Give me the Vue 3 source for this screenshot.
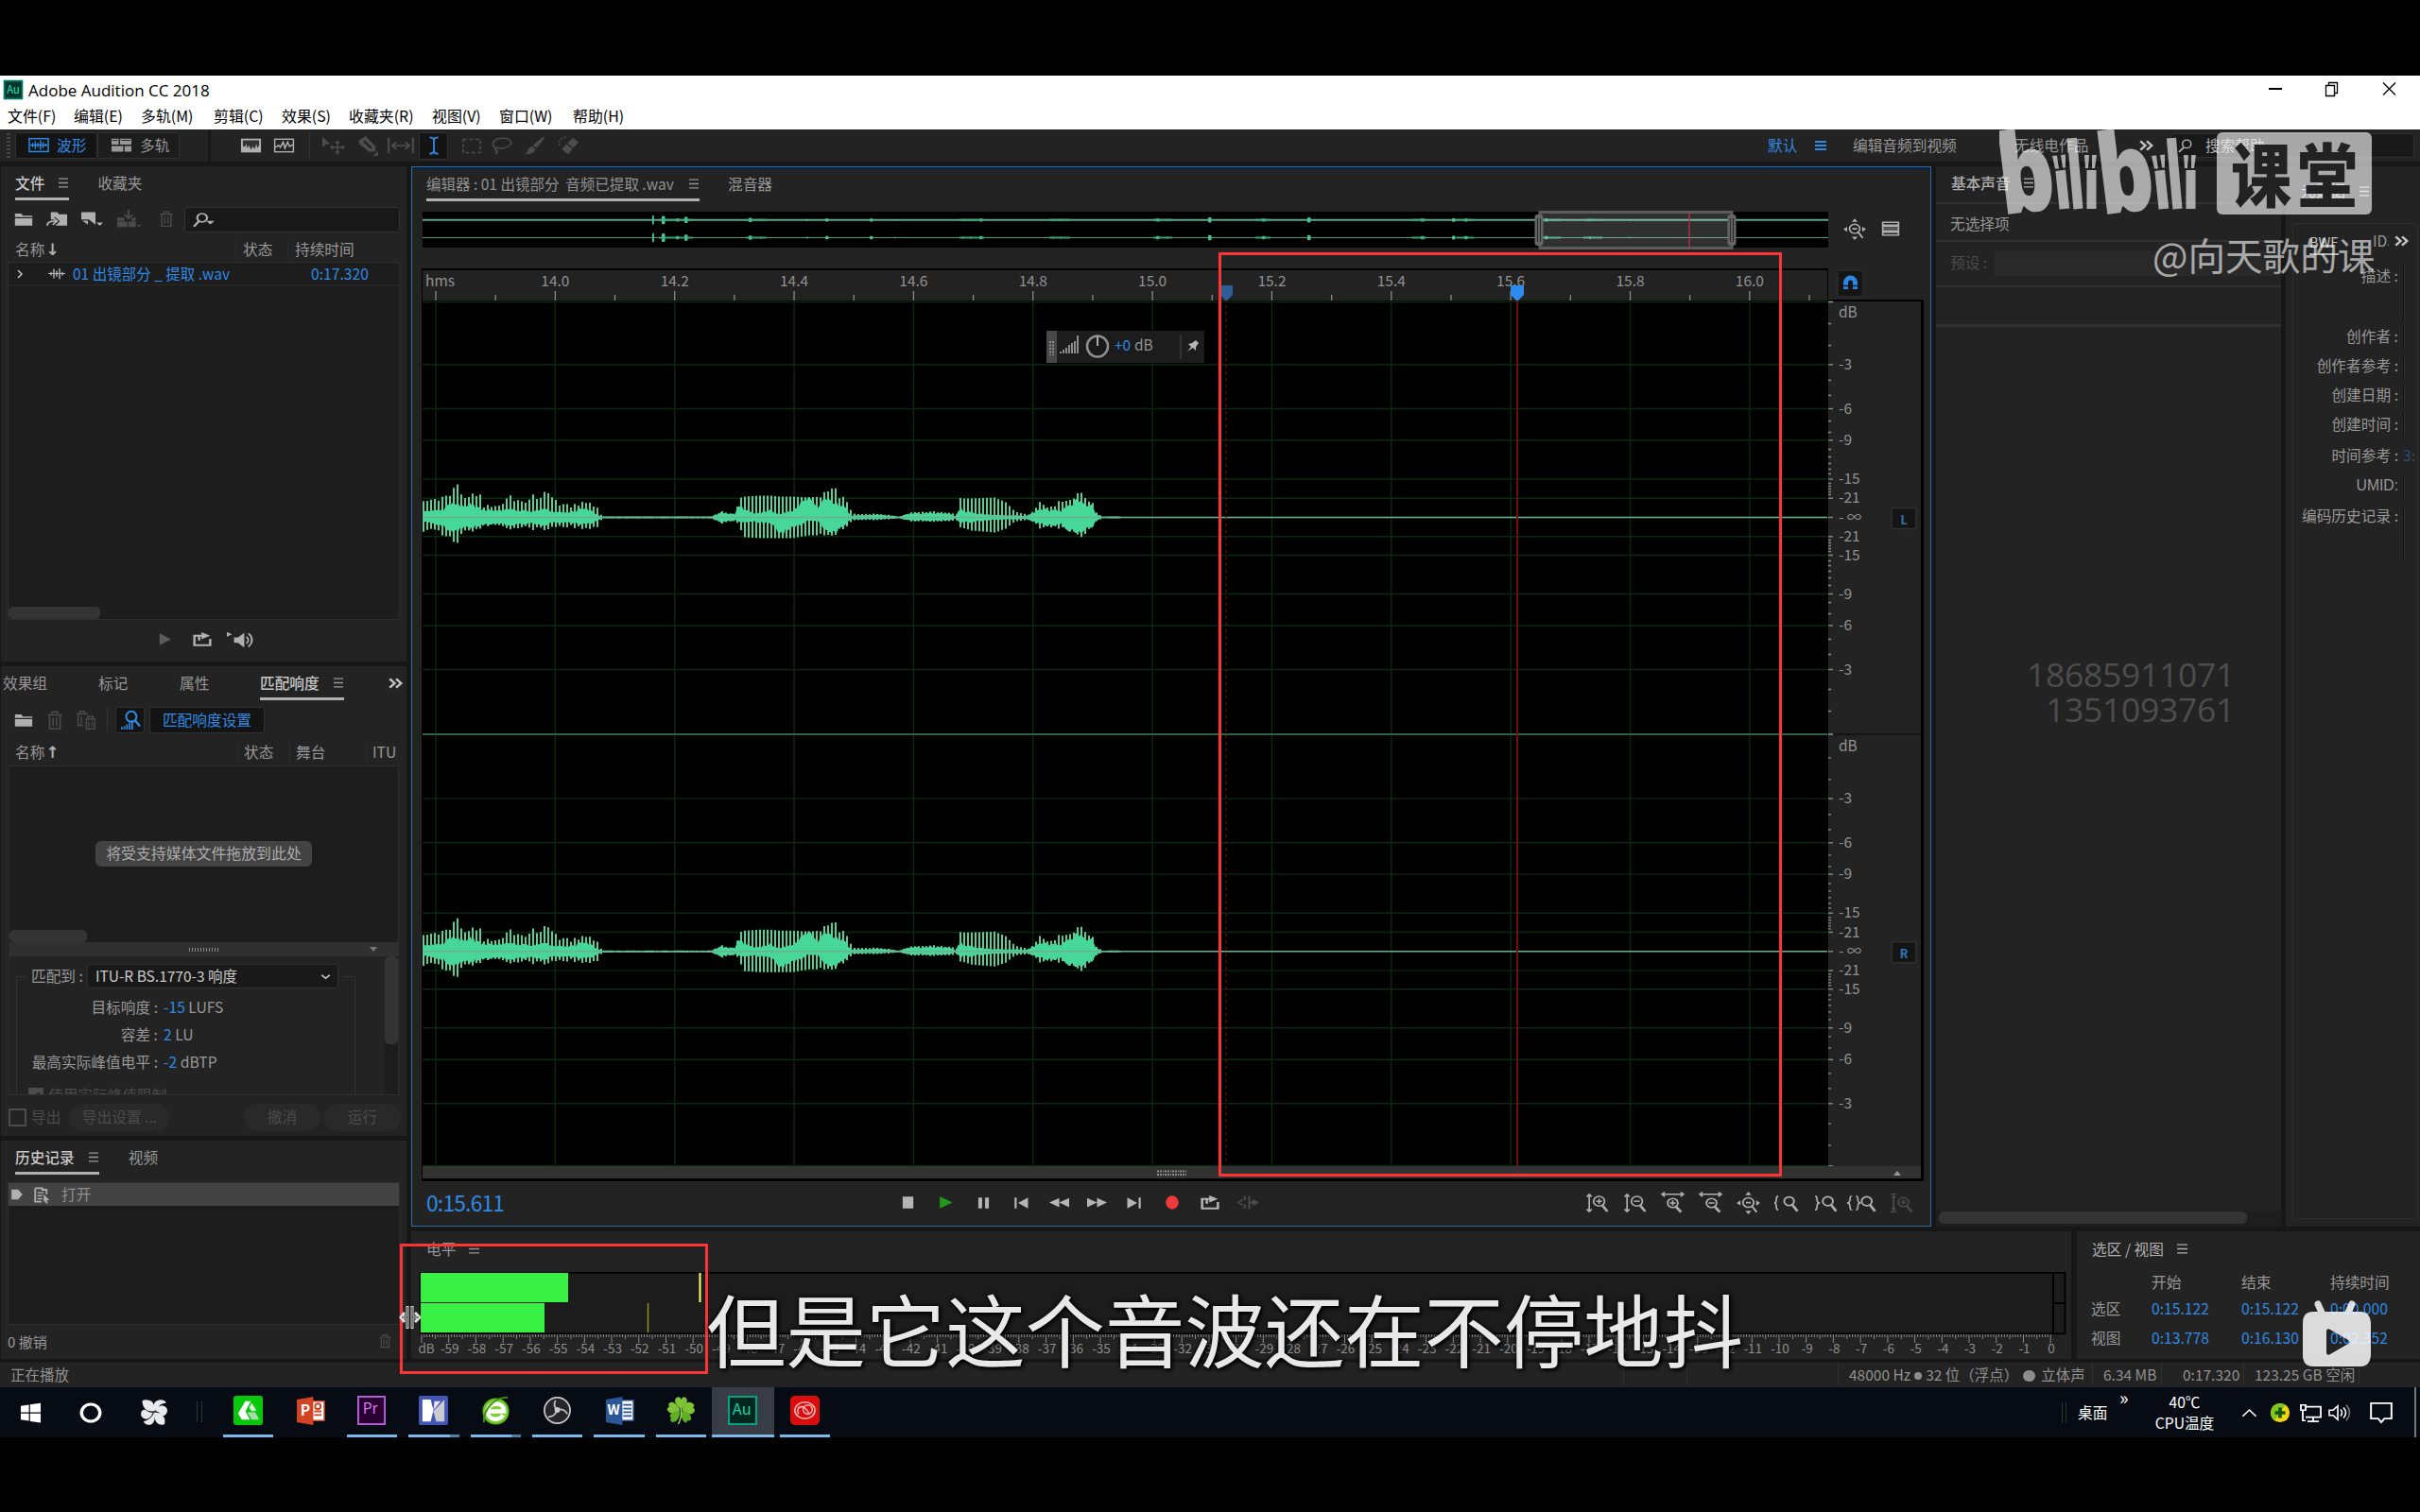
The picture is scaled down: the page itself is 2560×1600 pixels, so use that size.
<script setup>
import { h } from 'vue'

const icons = {
  menu: '<path d="M1 2h10M1 6h10M1 10h10" stroke="currentColor" stroke-width="1.3"/>',
  menuThick: '<path d="M0 2h12M0 6h12M0 10h12" stroke="currentColor" stroke-width="2"/>',
  wave: '<rect x="1" y="4" width="22" height="15" fill="none" stroke="currentColor" stroke-width="1.6"/><path d="M2 11.500h20M5 9v5M8 7v9M11 9v5M14 6v11M17 8v7M20 10v3" stroke="currentColor" stroke-width="1.5"/>',
  tracks: '<path fill="currentColor" d="M1 4h8v7H1zM10.500 4H23v7H10.500zM1 12.500h13V19H1zM15.500 12.500H23V19h-7.500z"/><path d="M2 6h6M12 6h10" stroke="#222" stroke-width="1"/>',
  spectrum: '<rect x="1" y="4" width="22" height="16" fill="currentColor"/><path fill="#333" d="M3 6h18v6l-2 3-1-5-2 6-2-3-2 4-2-5-2 3-1-5-2 4-2-2z"/>',
  spectral2: '<rect x="1.700" y="4.700" width="20.600" height="14.600" fill="none" stroke="currentColor" stroke-width="1.5"/><path d="M2 14l4-2 2 2 3-6 2 7 3-7 2 5 4-2" fill="none" stroke="currentColor" stroke-width="1.6"/>',
  move: '<path fill="currentColor" d="M1 2l8 8-4.500.500L1 14z"/><path d="M17 7v14M10 14h14M15 9l2-2 2 2M15 19l2 2 2-2M12 12l-2 2 2 2M22 12l2 2-2 2" fill="none" stroke="currentColor" stroke-width="1.600"/>',
  razor: '<path fill="currentColor" d="M2 6l8-5 12 12v6h-8L2 10z"/><path d="M8 7l9 8" stroke="#222" stroke-width="2.500"/><path fill="currentColor" d="M25 18v6h-6z"/>',
  slip: '<path d="M1 3v18M23 3v18M4 12h16M8 8l-4 4 4 4M16 8l4 4-4 4" fill="none" stroke="currentColor" stroke-width="1.8"/>',
  ibeam: '<path d="M7 2.500q4 0 5 2.500 1-2.500 5-2.500M12 5v14M7 21.500q4 0 5-2.500 1 2.500 5 2.500" fill="none" stroke="currentColor" stroke-width="2"/>',
  marquee: '<rect x="3" y="4" width="18" height="16" fill="none" stroke="currentColor" stroke-width="1.7" stroke-dasharray="4 2.500"/>',
  lasso: '<path d="M6 15C-1 11 3 4 12 3.500S24 9 20 12s-9 4-13 2.500c-3 .500-3 4 0 3.500 1 2-1 3-2 3.500" fill="none" stroke="currentColor" stroke-width="1.7"/>',
  brush: '<path fill="currentColor" d="M22 2c1 1-7 12-9 13l-3-3C12 9 21 1 22 2zM9 13l3 3c0 5-6 6-11 6 4-2 3-8 8-9z"/>',
  heal: '<path fill="currentColor" d="M16 3l6 5L11 22l-7-6z"/><path d="M2 12c-3-7 4-11 9-9" fill="none" stroke="currentColor" stroke-width="1.6" stroke-dasharray="2 2"/><path d="M10 10l7 6" stroke="#222" stroke-width="1.4"/>',
  chevrons: '<path d="M3 5l7 7-7 7M12 5l7 7-7 7" fill="none" stroke="currentColor" stroke-width="3.4"/>',
  search: '<circle cx="15" cy="9" r="6" fill="none" stroke="currentColor" stroke-width="2"/><path d="M11 14l-7 7" stroke="currentColor" stroke-width="2.6"/>',
  searchDrop: '<ellipse cx="10" cy="8.500" rx="4.800" ry="6" fill="none" stroke="currentColor" stroke-width="2"/><path d="M7 13l-5 8" stroke="currentColor" stroke-width="2.400"/><path fill="currentColor" d="M14 13h8l-4 5z"/>',
  folder: '<path fill="currentColor" d="M1 4h8l2 3h12v2H1zM1 10.500h22V21H1z"/>',
  importF: '<path fill="currentColor" d="M5 3h7l2 3h9v15H10l5-6-6-6v4H5z"/><path d="M1 21q0-6 9-6M7 11l5 4-5 5" fill="none" stroke="currentColor" stroke-width="2"/>',
  newF: '<path fill="currentColor" d="M1 3h15v17L9 13H1z"/><path fill="currentColor" d="M2 14.500h6V20zM17 17h7l-3.500 4.500z"/>',
  insert: '<path d="M12 0v10M8 6l4 5 4-5" stroke="currentColor" fill="none" stroke-width="2"/><path fill="currentColor" d="M1 10h7v4H1zM15 10h4v4h-4zM1 15h10v7H1zM12 15h7v7h-7zM20 19h4l-2 3z"/>',
  trash: '<path d="M4 6h16M9 5V2.500h6V5M6 6v16h12V6M10 9v10M14 9v10" fill="none" stroke="currentColor" stroke-width="1.7"/>',
  trash2: '<path d="M1 5h14M5 4V2h6v2M3 5v13h6M7 8v8M12 11h12M15 10V8h6v2M13 11v11h10V11M16 14v6M20 14v6" fill="none" stroke="currentColor" stroke-width="1.6"/>',
  clip: '<path d="M0 12h24M4 9v6M8 4v16M12 7v10M16 3v18M20 9v6" stroke="currentColor" stroke-width="1.900"/>',
  chev: '<path d="M8 4l8 8-8 8" fill="none" stroke="currentColor" stroke-width="3"/>',
  chevDown: '<path d="M4 8l8 8 8-8" fill="none" stroke="currentColor" stroke-width="3.200"/>',
  play: '<path fill="currentColor" d="M4 2l17 10L4 22z"/>',
  stop: '<path fill="currentColor" d="M3 2h18v20H3z"/>',
  pause: '<path fill="currentColor" d="M5 2h5v20H5zM14 2h5v20h-5z"/>',
  prev: '<path fill="currentColor" d="M3 2h3v20H3zM22 2v20L8 12z"/>',
  next: '<path fill="currentColor" d="M18 2h3v20h-3zM2 2v20l14-10z"/>',
  rew: '<path fill="currentColor" d="M12 3v18L0 12zM24 3v18l-12-9z"/>',
  ff: '<path fill="currentColor" d="M12 3v18l12-9zM0 3v18l12-9z"/>',
  rec: '<circle cx="12" cy="12" r="11.500" fill="currentColor"/>',
  loop: '<path d="M8 6H2v16h20V11" fill="none" stroke="currentColor" stroke-width="3"/><path d="M8 14V6h5" fill="none" stroke="currentColor" stroke-width="3"/><path fill="currentColor" d="M11 0l11 6-11 6z"/>',
  skip: '<path d="M8 1v7M8 15v7M13 1v22M6 7l-5 5 5 5" fill="none" stroke="currentColor" stroke-width="2"/><path fill="currentColor" d="M14 10h3V6l7 6-7 6v-4h-3z"/>',
  speaker: '<path fill="currentColor" d="M7 9h4l6-6v19l-6-6H7z"/><path fill="currentColor" d="M0 2l5 3-5 3z"/><path d="M19 8q4 4 0 9M21 4q7 8 0 17" fill="none" stroke="currentColor" stroke-width="1.700"/>',
  loud: '<circle cx="13" cy="8" r="6" fill="none" stroke="currentColor" stroke-width="2.200"/><path d="M17 12l6 7" stroke="currentColor" stroke-width="2.600"/><path d="M2 23v-3M5 23v-4M8 23v-6M11 23v-8M14 23V12" stroke="currentColor" stroke-width="1.800"/>',
  hist: '<path fill="none" stroke="currentColor" stroke-width="2.400" d="M3 3h10v2h6v6M3 3v18h9"/><path d="M6 9h9M6 13h7M6 17h7" stroke="currentColor" stroke-width="1.800"/><path fill="currentColor" d="M15 11l8 8h-4l2 4h-3l-1-3-2 2z"/>',
  histPtr: '<path fill="currentColor" d="M2 3h12l8 9-8 9H2z"/>',
  vzin: '<path d="M4 2v20M1.500 5L4 2l2.500 3M1.500 19L4 22l2.500-3" fill="none" stroke="currentColor" stroke-width="1.600"/><circle cx="14" cy="10" r="5.600" fill="none" stroke="currentColor" stroke-width="1.700"/><path d="M17.500 15l5 7" stroke="currentColor" stroke-width="2.600"/><path d="M11 10h6M14 7v6" stroke="currentColor" stroke-width="1.600"/>',
  vzout: '<path d="M4 2v20M1.500 5L4 2l2.500 3M1.500 19L4 22l2.500-3" fill="none" stroke="currentColor" stroke-width="1.600"/><circle cx="14" cy="10" r="5.600" fill="none" stroke="currentColor" stroke-width="1.700"/><path d="M17.500 15l5 7" stroke="currentColor" stroke-width="2.600"/><path d="M11 10h6" stroke="currentColor" stroke-width="1.600"/>',
  hzin: '<path d="M1 2h22M4-.5L1 2l3 2.500M20-.5L23 2l-3 2.500" fill="none" stroke="currentColor" stroke-width="1.600"/><circle cx="12" cy="12" r="5.200" fill="none" stroke="currentColor" stroke-width="1.700"/><path d="M15.500 16.500l5 6" stroke="currentColor" stroke-width="2.600"/><path d="M9 12h6M12 9v6" stroke="currentColor" stroke-width="1.600"/>',
  hzout: '<path d="M1 2h22M4-.5L1 2l3 2.500M20-.5L23 2l-3 2.500" fill="none" stroke="currentColor" stroke-width="1.600"/><circle cx="13" cy="12" r="5.200" fill="none" stroke="currentColor" stroke-width="1.700"/><path d="M16.500 16.500l5 6" stroke="currentColor" stroke-width="2.600"/><path d="M10 12h6" stroke="currentColor" stroke-width="1.600"/>',
  zfull: '<circle cx="12" cy="11.500" r="5.500" fill="none" stroke="currentColor" stroke-width="1.700"/><path d="M15.500 15.500l5 7M9.500 11.500h5" stroke="currentColor" stroke-width="2"/><path fill="currentColor" d="M12-1l3 4H9zM12 25l3-4H9zM0 12l4-3v6zM24 12l-4-3v6z"/>',
  zl: '<path d="M4 4q-2 0-2 4t-2 4q2 0 2 4t2 4" fill="none" stroke="currentColor" stroke-width="1.600"/><circle cx="15" cy="10" r="5" fill="none" stroke="currentColor" stroke-width="1.800"/><path d="M18.500 14.500l5 7" stroke="currentColor" stroke-width="2.600"/>',
  zr: '<path d="M1 4q2 0 2 4t3 4q-3 0-3 4t-2 4" fill="none" stroke="currentColor" stroke-width="1.600"/><circle cx="14" cy="10" r="5.200" fill="none" stroke="currentColor" stroke-width="1.800"/><path d="M17.500 14.500l5 7" stroke="currentColor" stroke-width="2.600"/>',
  zlr: '<path d="M2 4q-2 0-2 4t-3 4q3 0 3 4t2 4M6 4q2 0 2 4t3 4q-3 0-3 4t-2 4" fill="none" stroke="currentColor" stroke-width="1.500"/><circle cx="17" cy="10" r="5.200" fill="none" stroke="currentColor" stroke-width="1.800"/><path d="M20.500 14.500l5 7" stroke="currentColor" stroke-width="2.600"/>',
  zlast: '<path d="M4 4v16M1 2h6M1 22h6M2 6l2-2 2 2M2 18l2 2 2-2" fill="none" stroke="currentColor" stroke-width="1.600"/><circle cx="14" cy="11" r="5.200" fill="none" stroke="currentColor" stroke-width="1.600"/><path d="M17.500 15.500l5 7" stroke="currentColor" stroke-width="2.400"/><path d="M11 11h6M14 8v6" stroke="currentColor" stroke-width="1.500"/>',
  list: '<path fill="currentColor" d="M1 2h22v20H1z"/><path stroke="#222" stroke-width="1.700" d="M3 5h18M3 10.500h18M3 13.200h18M3 19h18"/>',
  win: '<path fill="#fff" d="M1 4l9-1.400V11.400H1zM11.300 2.400L23 .7v10.700H11.300zM1 12.700h9v8.700L1 20zM11.300 12.700H23v10.700l-11.700-1.700z"/>',
  cortana: '<circle cx="12" cy="12" r="9" fill="none" stroke="#fff" stroke-width="3.200"/>',
  fan: '<g fill="#e9e9ec"><path d="M2 3q0-2 3-2 6 0 7 5v5Q3 12 2 3z"/><path d="M12 11q-2-9 5-10 5 0 5 3-4 0-6 3t-4 4z"/><path d="M13 11q2-5 6-5 5 1 4 6-2 4-5 3-2-4-5-4z"/><path d="M12 12q7 0 9 6 1 5-2 5-7 0-7-11z"/><path d="M12 12q2 9-3 11-5 0-6-3 7-2 9-8z"/><path d="M11 12q-2 6-6 6-5-1-4-6 1-3 4-2 3 3 6 2z"/></g>',
  green: '<rect width="32" height="32" rx="3" fill="#08c80c"/><path fill="#fff" d="M13 6h6l-6 11 5 9H9l-4-7z"/><path fill="#d9f2da" d="M20 8l5 8-5 1-3-4z"/><path fill="#a9dcab" d="M15 18h9l4 8h-8z"/>',
  ppt: '<rect x="17" y="6" width="14" height="21" fill="#fff" stroke="#d04423" stroke-width="1.500"/><path d="M20 17h8M20 21h8" stroke="#d04423" stroke-width="2"/><circle cx="24" cy="11.500" r="3" fill="none" stroke="#d04423" stroke-width="2"/><path fill="#d04423" d="M1 4l18-3v31L1 29z"/><text x="5" y="22" font-size="16" font-weight="700" fill="#fff">P</text>',
  pr: '<rect x="1" y="1" width="29" height="30" fill="#2a0033" stroke="#b45fd8" stroke-width="2"/><text x="6" y="20" font-size="16" fill="#d87af0">Pr</text>',
  mx: '<rect width="32" height="32" rx="2" fill="#4355b5"/><path fill="#fff" d="M4 4h9l3 12-3 12H4z"/><path fill="#c9cbd2" d="M28 4L16 17l3 11h9z"/><path fill="#e4e5ee" d="M17 6h7l-8 10z"/>',
  e360: '<circle cx="16" cy="17" r="14.500" fill="#5cb51c"/><circle cx="16" cy="17" r="13" fill="#7cd034"/><path d="M7 17h18c0-11-17-11-18 0 0 10 13 11 17 4" stroke="#fff" stroke-width="4.500" fill="none"/><path d="M3 29C2 14 16 1 29 2" stroke="#3e9010" stroke-width="2" fill="none"/>',
  obs: '<circle cx="16" cy="16" r="14" fill="#26262a" stroke="#c9c9cc" stroke-width="1.800"/><path d="M14 5q-3 7 2 10M16 15q8-1 11 5M16 15q-2 8-10 8" stroke="#bdbdc0" stroke-width="1.800" fill="none"/><circle cx="16" cy="15.500" r="3" fill="#c9c9cc"/>',
  word: '<rect x="17" y="5" width="14" height="22" fill="#fff" stroke="#2b579a" stroke-width="1.500"/><path d="M20 10h9M20 14h9M20 18h9M20 22h9" stroke="#2b579a" stroke-width="1.700"/><path fill="#2b579a" d="M1 4l18-3v31L1 29z"/><text x="2.500" y="21" font-size="15" font-weight="700" fill="#fff">W</text>',
  clover: '<g fill="#7fc238"><path d="M16 15Q6 6 11 2q4-2 5 2 2-4 5-2 5 4-5 13z"/><path d="M15 16Q6 22 2 17q-3-3 1-5-2-4 2-5 5-1 10 9z"/><path d="M17 16q4-12 11-8 4 2 1 5 4 3 0 6-5 3-12-3z"/></g><g fill="#5fae28"><path d="M15 17q-1 11-8 12-4-1-2-5-3-3 1-5 4-3 9-2z"/><path d="M17 17q9 0 10 7 0 4-4 3-1 4-4 1-4-4-2-11z"/></g><path d="M16 14q1 9-3 17" stroke="#a9d95c" stroke-width="1.500" fill="none"/>',
  au: '<rect x="1" y="1" width="30" height="30" fill="#00261f" stroke="#00a884" stroke-width="2"/><text x="5" y="21" font-size="17" fill="#1fd0a5">Au</text>',
  auSmall: '<rect x="1" y="1" width="30" height="30" fill="#00352c" stroke="#007a62" stroke-width="3"/><text x="5" y="22" font-size="18" fill="#2fe0b5">Au</text>',
  cc: '<rect width="32" height="32" rx="5" fill="#d90d0d"/><ellipse cx="16" cy="16" rx="11" ry="9" fill="none" stroke="#f7b1b1" stroke-width="1.700"/><circle cx="19" cy="15" r="5" fill="none" stroke="#f7b1b1" stroke-width="1.600"/><path d="M9 20q-3-8 4-8 3 0 8 8" fill="none" stroke="#f7b1b1" stroke-width="1.600"/>',
  up: '<path d="M3 17l9-9 9 9" fill="none" stroke="#fff" stroke-width="2"/>',
  shield: '<circle cx="12" cy="12" r="11" fill="#f4d40e"/><path fill="#7ec820" d="M12 1a11 11 0 0 0-6 20L18 3a11 11 0 0 0-6-2z"/><path d="M12 6v12M6 12h12" stroke="#14551a" stroke-width="4"/>',
  net: '<path d="M7 5h16v12H7M15 17v4M9 22h12M2 3h5v6H2zM4 9v12h3" fill="none" stroke="#fff" stroke-width="1.800"/>',
  vol: '<path d="M1 9h4l5-5v16l-5-5H1z" fill="none" stroke="#fff" stroke-width="1.600"/><path d="M13 8q3 4 0 8M16 6q5 6 0 12" fill="none" stroke="#fff" stroke-width="1.600"/><path d="M19 3q7 9 0 18" fill="none" stroke="#777" stroke-width="1.600"/>',
  chat: '<path d="M2 2h20v17h-7l-3 4-3-4H2z" fill="none" stroke="#fff" stroke-width="1.800"/>'
}

const Ico = (p) => h('svg', {
  class: 'ico', width: p.w, height: p.h || p.w,
  viewBox: `0 0 ${p.box || 24} ${p.box || 24}`, preserveAspectRatio: 'none', innerHTML: icons[p.n]
})
Ico.props = ['n', 'w', 'h', 'box']

const menus = ['文件(F)', '编辑(E)', '多轨(M)', '剪辑(C)', '效果(S)', '收藏夹(R)', '视图(V)', '窗口(W)', '帮助(H)']

// timeline: 126.35 px per 0.2 s, canvas origin is the left edge of the ruler
const STEP = 126.35
const first = 14
const majors = Array.from({ length: 12 }, (_, i) => first + i * STEP)
const labels = ['', '14.0', '14.2', '14.4', '14.6', '14.8', '15.0', '15.2', '15.4', '15.6', '15.8', '16.0']

// dB scale, offset from the centre line of a channel
const scale = [[-161.700, '-3'], [-115, '-6'], [-81.700, '-9'], [-40.500, '-15'], [-20.300, '-21'], [0, '- ∞'], [20.300, '-21'], [40, '-15'], [81, '-9'], [114.500, '-6'], [161, '-3']]
const minorDb = [-205, -182, -145, -129, -102, -90, -72, -64, -57, -51, -46, -36, -33, -30, -27, -24]
const channels = [{ c: 263.500, n: 'L' }, { c: 722.800, n: 'R' }]

// envelope: x, spike up, spike down, body up, body down
const env = [
  [0, 17, 15, 8, 5], [10, 20, 12, 7, 6], [20, 23, 20, 8, 9], [30, 31, 27, 14, 14], [35, 36, 28, 14, 14], [42, 26, 18, 12, 11],
  [50, 26, 16, 14, 11], [60, 28, 14, 11, 10], [63, 14, 10, 8, 8], [86, 14, 9, 8, 7], [90, 29, 15, 9, 9], [96, 20, 13, 8, 8], [108, 20, 12, 7, 7],
  [125, 27, 14, 8, 8], [137, 26, 12, 8, 7], [143, 14, 10, 6, 6], [160, 14, 11, 6, 6], [172, 19, 14, 11, 8], [184, 10, 10, 4, 5], [189, 1, 1, 1, 1],
  [306, 1, 1, 1, 1], [317, 7, 7, 6, 6], [331, 4, 4, 3, 3], [333, 20, 8, 15, 5], [340, 22, 21, 8, 5], [356, 23, 22, 4, 5], [368, 23, 22, 9, 7],
  [377, 22, 22, 3, 17], [390, 22, 22, 8, 14], [408, 21, 19, 20, 3], [418, 22, 19, 11, 4], [424, 28, 20, 20, 12], [436, 30, 18, 15, 16], [446, 21, 12, 11, 8], [454, 4, 3, 2, 2],
  [484, 4, 3, 3, 2], [504, 1, 1, 1, 1], [514, 5, 4, 4, 3], [534, 7, 5, 5, 4], [557, 5, 4, 4, 3], [564, 3, 3, 1, 1],
  [567, 20, 10, 10, 6], [580, 20, 14, 5, 5], [604, 21, 16, 3, 3], [616, 16, 12, 2, 2], [626, 6, 4, 2, 2], [640, 3, 3, 2, 2], [648, 12, 8, 7, 6],
  [654, 20, 15, 11, 8], [662, 12, 12, 7, 8], [676, 21, 13, 8, 8], [684, 22, 18, 12, 14], [692, 27, 19, 18, 15], [698, 26, 22, 15, 15], [702, 14, 12, 12, 11], [707, 23, 14, 15, 12],
  [712, 5, 4, 4, 4], [718, 1, 1, 1, 1], [900, 0.500, 0.500, 0.500, 0.500]
]
function at(x) {
  let i = 0
  while (i < env.length - 2 && env[i + 1][0] <= x) i++
  const a = env[i], b = env[i + 1], t = Math.min(1, (x - a[0]) / (b[0] - a[0]))
  return [1, 2, 3, 4].map(k => a[k] + (b[k] - a[k]) * t)
}
let seed = 7
const rnd = () => (seed = (seed * 16807) % 2147483647) / 2147483647
let spikes = ''
let up = 'M0 0', dn = ''
for (let x = 0; x < 740; x += 2) {
  const [su, sd, bu, bd] = at(x)
  const j = 0.75 + rnd() * 0.4
  up += `L${x} ${(-bu * j).toFixed(1)}`
  dn = `L${x} ${(bd * j).toFixed(1)}` + dn
  if (x % 4 === 0 && su > 2) {
    const k = x > 335 && x < 420 || x > 570 && x < 630 ? 1 : 0.74 + rnd() * 0.3
    spikes += `M${x + 1} ${(-su * k).toFixed(1)}V${(sd * k).toFixed(1)}`
  }
}
const body = up + 'L740 0' + dn + 'Z'

const bumps = [[244, 9], [254, 8], [269, 3], [278, 6], [346, 4], [358, 2], [407, 2], [427, 3], [474, 3], [500, 1.500], [572, 2], [580, 2], [590, 3], [667, 2], [675, 2], [777, 3], [788, 2], [832, 5], [889, 3], [937, 5], [1057, 3], [1090, 3.500], [1103, 3], [1188, 3], [1235, 2.500], [1277, 1.500]]
const spread = [[250, 36], [342, 22], [568, 26], [663, 22], [773, 20], [881, 16], [1046, 16], [1094, 18], [1184, 20], [1228, 20]]

const transport = [['stop', 15, 15, 'g'], ['play', 19, 15, 'play'], ['pause', 19, 14, 'g'], ['prev', 18, 14, 'g'], ['rew', 21, 13, 'g'], ['ff', 21, 13, 'g'], ['next', 18, 14, 'g'], ['rec', 14, 15, 'rec'], ['loop', 20, 15, 'g'], ['skip', 23, 15, 'dim']]
const zooms = ['vzin', 'vzout', 'hzin', 'hzout', 'zfull', 'zl', 'zr', 'zlr', 'zlast']

const meter = Array.from({ length: 60 }, (_, i) => ({ x: 10 + i * 28.720, t: i ? String(i - 60) : 'dB' }))
const meterMinor = Array.from({ length: 600 }, (_, i) => `M${(10 + i * 2.872).toFixed(1)} 66v${i % 10 ? i % 5 ? 3 : 5 : 9}`).join('')

const meta = [['描述', 60, 'first'], ['创作者', 25, ''], ['创作者参考', 25, ''], ['创建日期', 25, ''], ['创建时间', 25, ''], ['时间参考', 0, 'ref'], ['UMID', 25, 'latin'], ['编码历史记录', 60, 'last']]
const apps = [['green', 1], ['ppt', 0], ['pr', 1], ['mx', 2], ['e360', 2], ['obs', 1], ['word', 1], ['clover', 1], ['au', 3], ['cc', 1]]
</script>

<template>
  <div class="screen">
    <header class="titlebar">
      <Ico n="auSmall" w="20" box="32" /><span class="apptitle">Adobe Audition CC 2018</span>
      <div class="winbtns">
        <svg width="180" height="30"><path d="M0 14h14" stroke="#000" stroke-width="2" /><path d="M60.500 10.500h9v11h-9zM63.500 10v-2.500h9v11h-3" fill="none" stroke="#000" stroke-width="1.300" /><path d="M121 7.500l13 13M134 7.500l-13 13" stroke="#000" stroke-width="1.300" /></svg>
      </div>
    </header>
    <nav class="menubar"><span v-for="m in menus" :key="m">{{ m }}</span></nav>

    <div class="toolbar">
      <i class="grip"></i>
      <div class="mode on"><Ico n="wave" w="22" h="22" />波形</div>
      <div class="mode"><Ico n="tracks" w="23" h="22" />多轨</div>
      <i class="tsep big"></i>
      <div class="views"><Ico n="spectrum" w="23" h="22" /><Ico n="spectral2" w="23" h="22" /></div>
      <i class="tsep"></i>
      <div class="tools">
        <Ico n="move" w="24" h="22" /><Ico n="razor" w="21" h="22" /><Ico n="slip" w="28" h="22" />
        <span class="ibeam"><Ico n="ibeam" w="22" h="22" /></span>
        <Ico n="marquee" w="24" h="21" /><Ico n="lasso" w="24" h="22" /><Ico n="brush" w="24" h="22" /><Ico n="heal" w="24" h="22" />
      </div>
      <div class="spaces">
        <span class="blue">默认</span><Ico n="menuThick" w="12" box="12" class="blue" /><span>编辑音频到视频</span><span>无线电作品</span><Ico n="chevrons" w="18" h="16" />
      </div>
      <div class="help"><Ico n="search" w="18" h="17" /><span>搜索帮助</span></div>
    </div>

    <main class="workspace">
      <aside class="left">
        <section class="panel files">
          <div class="tabs ftabs"><span class="tab active">文件<Ico n="menu" w="12" h="13" box="12" /></span><span>收藏夹</span></div>
          <div class="ficons">
            <Ico n="folder" w="20" h="18" /><Ico n="importF" w="23" h="19" /><Ico n="newF" w="24" h="19" /><Ico n="insert" w="26" h="20" class="dim" /><Ico n="trash" w="20" h="19" class="dim" />
            <div class="find"><Ico n="searchDrop" w="26" h="18" /></div>
          </div>
          <div class="fhead"><span>名称<b>↓</b></span><span>状态</span><span>持续时间</span></div>
          <div class="flist">
            <div class="frow"><Ico n="chev" w="12" h="12" class="lt" /><Ico n="clip" w="18" h="15" /><span class="blue name">01 出镜部分 _ 提取 .wav</span><span class="blue">0:17.320</span></div>
            <div class="hthumb"></div>
          </div>
          <div class="preview"><Ico n="play" w="17" h="15" class="dim" /><Ico n="loop" w="20" h="15" /><Ico n="speaker" w="26" h="20" /></div>
        </section>

        <section class="panel match">
          <div class="tabs mtabs"><span>效果组</span><span>标记</span><span>属性</span><span class="tab active">匹配响度<Ico n="menu" w="12" h="13" box="12" /></span><Ico n="chevrons" w="18" h="16" class="lt" /></div>
          <div class="micons">
            <Ico n="folder" w="20" h="18" /><Ico n="trash" w="22" h="22" class="dim" /><Ico n="trash2" w="21" h="22" class="dim" /><i></i>
            <span class="bbtn sq"><Ico n="loud" w="22" h="22" /></span><span class="bbtn wide">匹配响度设置</span>
          </div>
          <div class="mhead"><span>名称<b>↑</b></span><span>状态</span><span>舞台</span><span>ITU</span></div>
          <div class="mbox">
            <div class="drop"><span>将受支持媒体文件拖放到此处</span></div>
            <div class="hthumb short"></div>
            <div class="split"><i></i><b></b></div>
            <div class="params">
              <fieldset>
                <legend><span>匹配到 :</span><div class="select">ITU-R BS.1770-3 响度<Ico n="chevDown" w="13" h="11" /></div></legend>
                <div class="prow"><span>目标响度 :</span><span><em>-15</em> LUFS</span></div>
                <div class="prow"><span>容差 :</span><span><em>2</em> LU</span></div>
                <div class="prow"><span>最高实际峰值电平 :</span><span><em>-2</em> dBTP</span></div>
                <div class="limit"><i>✔</i>使用实际峰值限制</div>
              </fieldset>
              <div class="vtrack"><i></i></div>
            </div>
          </div>
          <div class="mfoot"><i></i><span>导出</span><span class="pill">导出设置 ...</span><span></span><span class="pill">撤消</span><span></span><span class="pill">运行</span></div>
        </section>

        <section class="panel history">
          <div class="tabs htabs"><span class="tab active">历史记录<Ico n="menu" w="12" h="13" box="12" /></span><span>视频</span></div>
          <div class="hlist"><div class="hrow"><Ico n="histPtr" w="14" h="14" /><Ico n="hist" w="18" h="19" /><span>打开</span></div></div>
          <div class="hfoot"><span>0 撤销</span><Ico n="trash" w="17" h="16" class="dim" /></div>
        </section>
      </aside>

      <div class="right">
        <div class="upper">
          <section class="editor">
            <div class="tabs etabs"><span class="tab">编辑器 : 01 出镜部分&nbsp; 音频已提取 .wav<Ico n="menu" w="12" h="13" box="12" /></span><span>混音器</span></div>
            <div class="overview">
              <svg width="1487" height="42" viewBox="0 0 1487 42">
                <rect y="2" width="1487" height="38" fill="#000" />
                <path d="M0 10.800h1487" stroke="#5fa588" stroke-width="2" /><path d="M0 29.500h1487" stroke="#4f9874" stroke-width="1.200" />
                <g v-for="y in [10.800, 29.500]" :key="y">
                  <rect v-for="(b, i) in bumps" :key="i" :x="b[0] - 1" :y="y - b[1] * 0.55" :width="b[1] > 2.500 && b[1] < 9 ? 3.500 : 1.800" :height="b[1] * 1.100" rx="1" fill="#48c494" />
                  <rect v-for="(b, i) in spread" :key="'s' + i" :x="b[0]" :y="y - 1.400" :width="b[1]" height="2.800" fill="#3aa87a" opacity=".5" />
                </g>
                <rect x="1182" y="2.500" width="203" height="38" fill="#fff" fill-opacity=".19" stroke="#5c5c5c" stroke-width="3" />
                <path d="M1340 3v36" stroke="#b8304e" stroke-width="1.300" />
                <g v-for="x in [1176.500, 1380.500]" :key="x"><rect :x="x" y="5" width="9" height="33" rx="3" fill="#666" /><path :d="`M${x + 3} 9v25M${x + 6} 9v25`" stroke="#2c2c2c" stroke-width="1.200" /></g>
              </svg>
              <Ico n="zfull" w="24" h="21" /><Ico n="list" w="20" h="18" />
            </div>

            <svg class="canvas" width="1590" height="966" viewBox="0 0 1590 966">
              <rect width="1488" height="966" x="-1" fill="#000" />
              <rect y="2" width="1486" height="32" fill="#222" />
              <rect x="1487" y="33" width="101" height="933" fill="#000" /><rect x="1487" y="35" width="98" height="915" fill="#232323" />
              <g stroke="#8a8a8a" stroke-width="1.300">
                <path v-for="x in majors" :key="x" :d="`M${x} 24v10M${x + STEP / 2} 28v6`" />
              </g>
              <text x="3" y="19" class="rl">hms</text>
              <text v-for="(l, i) in labels" :key="i" :x="majors[i]" y="19" class="rl mid">{{ l }}</text>
              <g stroke="#0a2a0d" stroke-width="1.400">
                <path v-for="x in majors" :key="x" :d="`M${x} 35V950`" />
                <path d="M0 35.500h1486M0 949.500h1486" />
                <template v-for="ch in channels" :key="ch.n"><path v-for="(s, i) in scale" :key="i" :d="`M0 ${ch.c + s[0]}h1486`" /></template>
              </g>
              <path d="M0 493h1486" stroke="#35603f" stroke-width="2" /><path d="M1487 493h98" stroke="#151515" stroke-width="2" />
              <g v-for="ch in channels" :key="ch.n">
                <g :transform="`translate(0 ${ch.c})`">
                  <path :d="spikes" stroke="#58cf9b" stroke-width="2" /><path :d="body" fill="#47d899" />
                  <path d="M0 0h1486" stroke="#6fae8e" stroke-width="1.400" />
                  <path v-for="(s, i) in scale" :key="i" :d="`M1487 ${s[0]}h5`" stroke="#8a8a8a" stroke-width="1.400" />
                  <path v-for="m in minorDb" :key="m" :d="`M1487 ${m}h3M1487 ${-m}h3`" stroke="#8a8a8a" stroke-width="1.300" />
                  <text v-for="(s, i) in scale" :key="'t' + i" x="1498" :y="s[0] + 5" class="rl">{{ s[1] }}</text>
                  <text x="1498" y="-212" class="rl">dB</text>
                  <rect x="1554" y="-10" width="26" height="22" rx="2" fill="#151515" stroke="#2f2f2f" stroke-width="1.500" />
                  <text x="1567" y="7" class="chn">{{ ch.n }}</text>
                </g>
              </g>
              <path d="M1487 35.500h5M1487 493h5M1487 950h5" stroke="#999" stroke-width="1.500" />
              <rect x="0" y="950" width="1585" height="13" fill="#323232" />
              <path d="M777 955.500h31M777 959h31" stroke="#8a8a8a" stroke-width="2" stroke-dasharray="2 1 2 1 1 1" /><path d="M1556 960l4-5 4 5z" fill="#9a9a9a" />
              <path d="M850 32V950" stroke="#6e1010" stroke-width="1.200" stroke-dasharray="3 4" /><path d="M1158 34V950" stroke="#7c0f12" stroke-width="1.800" />
              <path d="M844 18h13v10l-6 6h-2l-5-6z" fill="#2c5d94" /><path d="M1151 18h14v10l-6 6h-2l-6-6z" fill="#2c8cf0" />
              <rect x="1497" y="2" width="27" height="28" rx="2" fill="#151515" stroke="#2c2c2c" stroke-width="1.500" />
              <path d="M1505.500 22v-7a5 5 0 0 1 10 0v7" fill="none" stroke="#2c86e0" stroke-width="5" /><path d="M1503 18.500h5M1513 18.500h5" stroke="#0e2338" stroke-width="1.500" />
              <g transform="translate(660 66)">
                <rect width="167" height="34" fill="#1c1c1c" /><rect width="11" height="34" fill="#484848" /><path d="M4 11v15M7 11v15" stroke="#a0a0a0" stroke-width="1.500" stroke-dasharray="2 1.500" />
                <path d="M15 24v-2M18 24v-4M21 24v-6M24 24v-9M27 24v-11M30 24V11M33 24V5" stroke="#a0a0a0" stroke-width="1.700" />
                <circle cx="54" cy="16.500" r="11" fill="#1a1a1a" stroke="#909090" stroke-width="2.500" /><path d="M54 6v10" stroke="#aaa" stroke-width="2" />
                <text x="72" y="21" class="rl b">+0</text><text x="93" y="21" class="rl">dB</text>
                <path d="M142 4v26" stroke="#3a3a3a" stroke-width="1.500" /><path d="M149 22l4-5-3-3 4-1 4-3 3 3-3 4v4l-3-3z" fill="#b5b5b5" />
              </g>
            </svg>

            <div class="transport">
              <span class="time">0:15.611</span>
              <div class="tbtns"><span v-for="t in transport" :key="t[0]" :class="t[3]"><Ico :n="t[0]" :w="t[1]" :h="t[2]" /></span></div>
              <div class="zbtns"><span v-for="z in zooms" :key="z" :class="{ dim: z === 'zlast' }"><Ico :n="z" w="25" h="22" /></span></div>
            </div>
          </section>

          <section class="sound">
            <div class="strow">基本声音<Ico n="menu" w="12" h="13" box="12" /></div>
            <div class="noitem">无选择项</div>
            <div class="preset"><span>预设 :</span><i></i></div>
            <div class="blank"></div>
            <div class="phones"><p>18685911071</p><p>1351093761</p></div>
            <div class="strack"><i></i></div>
          </section>

          <section class="metadata">
            <div class="mttl">元数据<Ico n="menu" w="12" h="13" box="12" /></div>
            <div class="mdbox">
              <div class="mdtabs"><span class="bwf">BWF</span><span>ID3</span><Ico n="chevrons" w="18" h="16" class="lt" /></div>
              <div v-for="m in meta" :key="m[0]" class="mdrow" :class="m[2]"><span>{{ m[0] }}{{ m[2] === 'latin' ? '' : ' ' }}:</span><i v-if="m[1]" :style="{ height: m[1] + 'px' }"></i><em v-else>3<s>:</s></em></div>
            </div>
          </section>
        </div>

        <div class="lower">
          <section class="levels">
            <div class="ltitle">电平<Ico n="menu" w="13" h="13" box="12" /></div>
            <svg class="meter" width="1755" height="92" viewBox="-1 0 1755 92">
              <rect x="8.500" y=".8" width="1740" height="64.500" fill="#1c1c1c" stroke="#000" stroke-width="1.800" />
              <path d="M1736 0v65M1736 33h13" stroke="#000" stroke-width="2" />
              <rect x="9" y="1" width="156" height="31" fill="#37f043" /><rect x="9" y="33" width="131" height="31" fill="#37f043" />
              <path d="M304.500 1v31" stroke="#ffff70" stroke-width="2" /><path d="M249.500 33v31" stroke="#8f8f20" stroke-width="1.500" />
              <path :d="meterMinor" stroke="#8a8a8a" stroke-width="1" /><path d="M1733.200 66v9" stroke="#8a8a8a" />
              <text v-for="m in meter" :key="m.t" :x="m.x + (m.t === 'dB' ? 5 : 1)" y="86" class="ml">{{ m.t }}</text><text x="1734" y="86" class="ml">0</text>
            </svg>
          </section>
          <section class="selview">
            <div class="ltitle">选区 / 视图<Ico n="menu" w="13" h="13" box="12" /></div>
            <div class="sgrid">
              <span></span><span>开始</span><span>结束</span><span>持续时间</span>
              <span>选区</span><em>0:15.122</em><em>0:15.122</em><em>0:00.000</em>
              <span>视图</span><em>0:13.778</em><em>0:16.130</em><em>0:02.352</em>
            </div>
          </section>
        </div>
      </div>
    </main>

    <footer class="status"><span class="now">正在播放</span><i class="a"></i><i class="b"></i><span class="c">48000 Hz<b class="sm"></b>32 位（浮点）<b></b>立体声</span><span class="d">6.34 MB</span><span class="e">0:17.320</span><span class="f">123.25 GB 空闲</span></footer>

    <div class="taskbar">
      <div class="sys"><Ico n="win" w="23" h="22" /><Ico n="cortana" w="26" h="24" /><Ico n="fan" w="30" h="29" /></div>
      <i class="dbl"></i>
      <div class="apps"><span v-for="a in apps" :key="a[0]" :class="{ open: a[1], multi: a[1] === 2, cur: a[1] === 3 }"><Ico :n="a[0]" w="31" h="31" box="32" /></span></div>
      <div class="tray">
        <i class="dbl"></i><span class="desk">桌面</span><span class="more">»</span><span class="temp">40℃<br>CPU温度</span>
        <Ico n="up" w="19" h="18" /><Ico n="shield" w="22" h="22" /><Ico n="net" w="24" h="22" /><Ico n="vol" w="24" h="22" /><Ico n="chat" w="26" h="23" /><i class="edge"></i>
      </div>
    </div>

    <!-- video annotations drawn over the desktop -->
    <div class="frame f1"></div>
    <div class="frame f2"></div>
    <svg class="cursor" width="24" height="30" viewBox="0 0 24 30"><path d="M10 3v24M15 3v24M3 15h7M15 15h8M7 10l-4 5 4 5M18 10l5 5-5 5" fill="none" stroke="#ddd" stroke-width="3" /><path d="M10 4v22M15 4v22M4 15h6M15 15h7" fill="none" stroke="#222" stroke-width="1" /></svg>
    <p class="subtitle">但是它这个音波还在不停地抖</p>
    <svg class="brand" width="400" height="95" viewBox="0 0 400 95">
      <g fill="#fff" opacity=".62">
        <g class="logo" v-for="x in [0, 105]" :key="x" :transform="`translate(${x} 0)`">
          <text transform="rotate(-7 8 90)" x="3" y="91" font-size="117" textLength="60" lengthAdjust="spacingAndGlyphs">b</text>
          <text transform="rotate(-6 69 85)" x="60" y="85" font-size="74" textLength="18" lengthAdjust="spacingAndGlyphs">ı</text>
          <text transform="rotate(-5 83 85)" x="75" y="85" font-size="99" textLength="17" lengthAdjust="spacingAndGlyphs">l</text>
          <text x="89" y="85" font-size="74" textLength="17" lengthAdjust="spacingAndGlyphs">ı</text>
          <path d="M56 29l5-.5 2 14h-4zM65 28l5-.5v14h-3zM90 28h5l-1 14h-3zM98 28h5l-2 14h-3z" />
        </g>
        <rect x="230" y="4" width="164" height="87" rx="6" />
      </g>
      <text class="course" transform="translate(245 77) scale(1 1.130)" textLength="134">课堂</text>
    </svg>
    <p class="handle">@向天歌的课</p>
    <svg class="tv" width="74" height="72" viewBox="0 0 74 72"><g opacity=".84"><path d="M22 15L17 4M48 15l5-11" stroke="#fff" stroke-width="7" stroke-linecap="round" /><path fill="#fff" fill-rule="evenodd" d="M12 12h50q10 0 11 12v34q-1 12-11 12H12Q1 70 1 58V24Q1 12 12 12zM26 33v22q0 4 4 2l19-11q3-2 0-4L30 31q-4-2-4 2z" /></g></svg>
  </div>
</template>

<style>
body { background: #000; overflow: hidden; }
.ico { flex: none; display: block; font-family: "Noto Sans CJK SC", sans-serif; overflow: visible; }
</style>

<style scoped>
* { box-sizing: border-box; }
p { margin: 0; }
i, em { font-style: normal; }
.screen { position: relative; width: 2560px; height: 1600px; padding-top: 80px; background: #000; overflow: hidden; display: flex; flex-direction: column; font: 15.700px/1 "Noto Sans CJK SC", sans-serif; color: #979797; white-space: nowrap; }
.blue, em { color: #2f8ae4; }
.dim { color: #4b4b4b; }
.lt { color: #c4c4c4; }
.titlebar { flex: none; height: 30px; background: #fff; color: #000; display: flex; align-items: center; padding-left: 4px; }
.apptitle { margin-left: 6px; font: 17px/1 "Open Sans", sans-serif; }
.winbtns { margin-left: auto; width: 160px; height: 30px; overflow: hidden; }
.menubar { flex: none; height: 27px; background: #fff; color: #000; display: grid; grid-template-columns: 70px 71px 77px 72px 71px 88px 71px 78px 80px; padding: 0 0 1px 8px; align-items: center; font-size: 15.900px; }
.toolbar { flex: none; height: 34px; background: #232323; display: flex; align-items: center; padding-left: 7px; }
.grip { width: 4px; height: 26px; margin-right: 5px; background: repeating-linear-gradient(#444 0 2px, transparent 2px 4px); }
.mode { width: 87px; height: 28px; border: 1px solid #313131; border-radius: 2px; background: #1d1d1d; display: flex; align-items: center; gap: 8px; padding-left: 13px; }
.mode.on { background: #141414; color: #2f8ae4; }
.tsep { width: 1px; height: 28px; background: #343434; margin: 0 12px 0 15px; }
.tsep.big { width: 3px; height: 34px; background: #181818; margin: 0 31px 0 30px; }
.views { display: flex; gap: 12px; color: #b0b0b0; }
.tools { display: grid; grid-template-columns: 38px 32px 33px 44px 32px 35px 36px 36px; align-items: center; color: #4c4c4c; }
.ibeam { width: 31px; height: 29px; background: #141414; border: 1px solid #303030; border-radius: 2px; display: grid; place-items: center; color: #2f8ae4; }
.spaces { margin-left: auto; display: grid; grid-template-columns: 50px 40px 171px 131px 34px; align-items: center; }
.spaces > :last-child { color: #c0c0c0; }
.help { width: 258px; height: 26px; margin-right: 6px; border: 1px solid #303030; border-radius: 3px; background: #191919; display: flex; align-items: center; gap: 13px; padding-left: 5px; color: #b0b0b0; }

.workspace { flex: none; height: 1270px; background: #171717; padding-top: 5px; display: flex; gap: 5px; }
.left { width: 430px; padding-left: 1px; display: flex; flex-direction: column; gap: 5px; }
.panel { background: #232323; overflow: hidden; display: flex; flex-direction: column; }
.files { height: 524px; }
.match { height: 497px; }
.history { height: 231px; }
.tabs { flex: none; height: 36px; display: flex; align-items: center; }
.tab { height: 35px; display: inline-flex; align-items: center; gap: 14px; border-bottom: 3px solid #b0b0b0; padding: 3px 0 1px; }
.active { color: #c8c8c8; font-weight: 500; }
.active .ico { color: #999; }
.ftabs { padding-left: 15px; gap: 30px; }
.ficons { flex: none; height: 39px; display: grid; grid-template-columns: 34px 36px 38px 43px 29px 228px; align-items: center; padding: 0 0 0 14px; color: #b0b0b0; }
.ficons .dim { color: #4b4b4b; }
.find { height: 27px; border: 1px solid #303030; border-radius: 3px; background: #191919; display: flex; align-items: center; padding-left: 7px; margin-top: 2px; }
.fhead { flex: none; height: 26px; display: grid; grid-template-columns: 241px 55px 100px; align-items: center; padding-left: 15px; }
.fhead span + span, .mhead span + span { border-left: 1px solid #2c2c2c; height: 22px; line-height: 22px; }
.fhead span + span { padding-left: 7px; margin-left: -8px; }
.fhead b, .mhead b { color: #b0b0b0; font: 700 17px/14px "DejaVu Sans"; margin-left: 1px; display: inline-block; width: 13px; }
.flist { flex: none; margin: 0 7px 0 7px; height: 379px; border: 1px solid #2e2e2e; background: #1d1d1d; display: flex; flex-direction: column; justify-content: space-between; }
.frow { height: 24px; border-bottom: 1px solid #292929; display: grid; grid-template-columns: 34px 26px 254px 90px; align-items: center; padding-left: 6px; color: #b5b5b5; }
.frow .ico:first-child { margin-left: 0; }
.frow .ico + .ico { margin-left: 2px; }
.frow .name { padding-left: 2px; font-size: 15.500px; }
.hthumb { width: 97px; height: 13px; border-radius: 5px; background: #343434; }
.preview { flex: 1; display: flex; gap: 21px; align-items: center; padding: 0 0 3px 165px; color: #b0b0b0; }
.preview > :last-child { margin-left: -5px; }
.preview .dim { color: #5a5a5a; }
.mtabs { padding-left: 2px; display: grid; grid-template-columns: 101px 86px 85px 135px 20px; }
.mtabs .tab { justify-self: start; }
.micons { flex: none; height: 42px; display: grid; grid-template-columns: 32px 33px 33px 9px 36px 122px; align-items: center; padding-left: 14px; color: #b0b0b0; }
.micons > i { width: 1px; height: 26px; background: #343434; }
.bbtn { display: grid; place-items: center; background: #141414; border: 1px solid #303030; border-radius: 3px; color: #2f8ae4; height: 28px; }
.bbtn.sq { width: 31px; }
.mhead { flex: none; height: 26px; display: grid; grid-template-columns: 235px 55px 81px 34px; align-items: center; padding-left: 15px; }
.mhead span + span { padding-left: 6px; }
.mbox { flex: none; margin: 1px 8px 0 8px; height: 349px; border: 1px solid #2e2e2e; background: #1d1d1d; display: flex; flex-direction: column; }
.drop { height: 173px; padding-top: 79px; text-align: center; }
.drop span { display: inline-block; height: 27px; line-height: 25px; padding: 0 11px; border-radius: 6px; background: #434343; color: #ababab; font-size: 15.900px; }
.hthumb.short { width: 82px; }
.split { flex: none; height: 15px; background: #303030; display: flex; align-items: center; padding-left: 190px; }
.split i { width: 32px; height: 4px; background: repeating-linear-gradient(90deg, #888 0 1px, transparent 1px 3px); }
.split b { margin-left: 159px; border: 4px solid transparent; border-top: 5px solid #777; border-bottom: 0; }
.params { flex: 1; min-height: 0; overflow: hidden; display: flex; background: #232323; }
fieldset { border: 1px solid #333; border-bottom: 0; width: 359px; height: 160px; margin: 8px 0 0 7px; padding: 0; min-width: 0; display: block; }
legend { display: flex; align-items: center; padding: 0 5px; margin-left: 10px; gap: 4px; height: 26px; }
.select { width: 266px; height: 26px; border: 1px solid #303030; border-radius: 3px; background: #191919; color: #c9c9c9; display: flex; align-items: center; justify-content: space-between; padding: 0 6px 0 8px; font-size: 15.500px; }
.prow { height: 29px; display: grid; grid-template-columns: 149px 1fr; gap: 6px; align-items: center; font-size: 15.700px; padding-top: 11px; }
.prow > :first-child { text-align: right; }
.limit { display: flex; align-items: center; gap: 5px; margin: 18px 0 0 12px; color: #4b4b4b; }
.limit i { width: 16px; height: 16px; background: #4b4b4b; color: #222; font-size: 13px; line-height: 16px; text-align: center; }
.vtrack { margin-left: auto; width: 14px; background: #1d1d1d; }
.vtrack i { display: block; height: 93px; border-radius: 5px; background: #343434; }
.mfoot { flex: 1; display: grid; grid-template-columns: 24px 40px 107px 78px 81px 4px 81px; align-items: center; padding: 3px 0 0 8px; color: #4b4b4b; }
.mfoot i { width: 19px; height: 19px; border: 2px solid #4b4b4b; }
.pill { height: 29px; line-height: 28px; border-radius: 15px; background: #292929; text-align: center; }
.htabs { padding-left: 15px; gap: 31px; }
.hlist { margin: 8px 7px 0 7px; height: 151px; border: 1px solid #2e2e2e; background: #1d1d1d; }
.hrow { height: 24px; background: #434343; display: grid; grid-template-columns: 24px 30px 80px; align-items: center; padding-left: 2px; color: #b0b0b0; }
.hrow span { color: #8d8d8d; }
.hfoot { flex: 1; display: flex; justify-content: space-between; align-items: center; padding: 0 14px 2px 7px; font-size: 15px; }

.right { flex: 1; display: flex; flex-direction: column; gap: 5px; }
.upper { height: 1122px; display: flex; }
.editor { width: 1608px; border: 1.500px solid #2f6ba6; box-shadow: inset 0 2px 0 #062444; background: #232323; display: flex; flex-direction: column; }
.etabs { padding-left: 15px; gap: 30px; }
.etabs .tab { font-size: 15.500px; color: #919191; width: 289px; justify-content: space-between; gap: 0; }
.overview { flex: none; height: 71px; display: flex; align-items: flex-start; padding: 9px 0 0 11px; color: #b0b0b0; }
.overview .ico { margin: 10px 0 0 16px; }
.overview .ico + .ico { margin-top: 11px; }
.canvas { flex: none; margin-left: 11px; overflow: visible; }
.rl { font-size: 15.500px; fill: #919191; }
.rl.b { fill: #2f8ae4; }
.mid { text-anchor: middle; }
.chn { font-size: 12.500px; font-weight: 700; fill: #2d77be; text-anchor: middle; }
.transport { flex: 1; display: grid; grid-template-columns: 498px 720px 1fr; align-items: center; padding: 0 0 2px 15px; }
.time { font-size: 22.800px; color: #2f8ae4; letter-spacing: -.8px; margin-top: 2px; }
.tbtns { display: grid; grid-template-columns: repeat(10, 40px); color: #b5b5b5; justify-items: center; align-items: center; width: 400px; margin-left: -9px; }
.tbtns .play { color: #1f9a1a; }
.tbtns .rec { color: #f23a3a; }
.tbtns .dim { color: #4b4b4b; }
.zbtns { display: grid; grid-template-columns: 40px 40px 40px 40px 40px 42px 38px 42px 40px; color: #b0b0b0; margin-left: 8px; }
.zbtns .dim { color: #4b4b4b; }

.sound { width: 365px; margin-left: 5px; background: #232323; display: flex; flex-direction: column; }
.strow { height: 40px; display: flex; align-items: center; gap: 13px; padding: 0 0 3px 16px; border-bottom: 2px solid #323232; color: #b0b0b0; font-weight: 500; }
.noitem { height: 40px; line-height: 42px; padding-left: 15px; border-bottom: 2px solid #323232; }
.preset { height: 48px; display: flex; align-items: center; border-bottom: 2px solid #323232; padding-left: 15px; color: #4b4b4b; }
.preset span { width: 47px; padding-bottom: 3px; }
.preset i { width: 300px; height: 26px; background: #292929; }
.blank { height: 42px; border-bottom: 3px solid #323232; }
.phones { flex: 1; padding: 349px 49px 0 0; text-align: right; font: 35.500px/37px "Open Sans", sans-serif; letter-spacing: -.3px; color: #4d4d4d; }
.strack { height: 17px; background: #1e1e1e; padding: 1px 0 0 3px; }
.strack i { display: block; width: 326px; height: 13px; border-radius: 5px; background: #343434; }
.metadata { flex: 1; margin-left: 5px; background: #232323; display: flex; flex-direction: column; padding: 0 7px 8px 7px; overflow: hidden; }
.mttl { height: 60px; padding: 0 0 8px 9px; display: flex; align-items: center; gap: 14px; color: #c0c0c0; }
.mdbox { flex: 1; border: 1px solid #303030; border-radius: 3px; overflow: hidden; }
.mdtabs { height: 36px; display: grid; grid-template-columns: 67px 17px 5px 20px; align-items: center; padding-left: 17px; }
.mdtabs > span { overflow: hidden; }
.mdtabs > .ico { grid-column: 4; }
.mdtabs .bwf { width: 31px; height: 30px; line-height: 31px; color: #c4c4c4; border-bottom: 2px solid #b0b0b0; font-size: 14.500px; }
.mdrow { height: 31px; display: grid; grid-template-columns: 111px 14px; column-gap: 5px; }
.mdrow > span { text-align: right; line-height: 24px; }
.mdrow > i { width: 2px; background: #111; border-right: 1px solid #333; }
.mdrow.first { height: 73px; padding-top: 7px; margin-bottom: -2px; }
.mdrow.ref { height: 34px; padding-top: 2px; line-height: 24px; }
.mdrow.latin { height: 32px; font-family: "Liberation Sans", sans-serif; }
.mdrow.ref em { color: #1f4f80; overflow: hidden; }
.mdrow s { color: #4b4b4b; text-decoration: none; }

.lower { height: 135px; display: flex; gap: 6px; }
.levels { width: 1756px; background: #232323; }
.ltitle { height: 43px; display: flex; align-items: center; gap: 13px; padding: 0 0 6px 16px; }
.meter { display: block; }
.ml { font-size: 13.500px; fill: #8d8d8d; text-anchor: middle; }
.selview { flex: 1; background: #232323; }
.selview .ltitle { color: #b0b0b0; }
.sgrid { display: grid; grid-template-columns: 64px 95px 94px 100px; grid-template-rows: 21px 36px 25px; padding-left: 15px; align-items: center; font-size: 15.700px; }
.status { flex: none; height: 27px; background: #232323; border-top: 1px solid #1a1a1a; display: flex; align-items: flex-start; color: #919191; font-size: 15.500px; }
.status > * { height: 24px; line-height: 24px; }
.status > :not(.now) { border-left: 1px solid #303030; }
.now { width: 1717px; padding-left: 11px; }
.status .a { width: 67px; }
.status .b { width: 160px; }
.status .c { width: 269px; padding-left: 11px; }
.status .c b { display: inline-block; width: 13px; height: 12px; border-radius: 6px; background: #8d8d8d; margin: 0 6px 0 5px; vertical-align: -1px; }
.status .c b.sm { width: 8px; height: 8px; margin: 0 4px; vertical-align: 1px; }
.status .d { width: 73px; padding-left: 11px; }
.status .e { width: 87px; padding-left: 22px; }
.status .f { width: 123px; padding-left: 11px; border-right: 1px solid #303030; }

.taskbar { flex: none; height: 53px; background: #070c14; color: #fff; display: flex; }
.sys { width: 208px; display: grid; grid-template-columns: 62px 65px 50px; align-items: center; padding-left: 21px; }
.dbl { width: 6px; height: 22px; margin-top: 15px; border: 1px solid #333; border-width: 0 1px; }
.apps { margin-left: 16px; display: grid; grid-template-columns: repeat(10, 65.400px); }
.apps span { height: 53px; display: grid; place-items: center; padding-bottom: 1px; border-bottom: 3px solid transparent; margin: 0 6px; }
.apps .open { border-color: #76b9ed; }
.apps .multi { border-image: linear-gradient(90deg, #76b9ed 78%, #4f81a6 78%) 3; border-width: 0 0 3px; border-style: solid; }
.apps .cur { background: #383c44; margin: 0; }
.tray { margin-left: auto; width: 379px; display: grid; grid-template-columns: 17px 44px 33px 95px 31px 31px 31px 43px 48px 2px; align-items: center; }
.tray .dbl { margin: 0; width: 5px; }
.more { align-self: start; margin-top: 1px; font-size: 20px; }
.temp { text-align: center; line-height: 22px; }
.tray .temp { width: 76px; margin-left: -2px; }
.edge { width: 2px; height: 53px; background: #777; }

.frame { position: absolute; border: 3px solid #fb3535; }
.f1 { left: 1289px; top: 267px; width: 596px; height: 978px; }
.f2 { left: 423px; top: 1316px; width: 326px; height: 138px; }
.cursor { position: absolute; left: 421px; top: 1379px; }
.subtitle { position: absolute; left: 747px; top: 1362px; font-size: 84.400px; line-height: 84px; color: #e8e8e8; text-shadow: 0 0 5px #000, 2px 2px 4px #000; }
.brand { position: absolute; left: 2115px; top: 136px; }
.logo { font-family: "Noto Sans", sans-serif; font-weight: 900; }
.course { font: 900 64px "Noto Sans CJK SC", sans-serif; fill: #222; }
.handle { position: absolute; left: 2277px; top: 249px; font-size: 39.600px; line-height: 40px; color: rgba(255, 255, 255, .62); }
.tv { position: absolute; left: 2435px; top: 1376px; }
</style>
